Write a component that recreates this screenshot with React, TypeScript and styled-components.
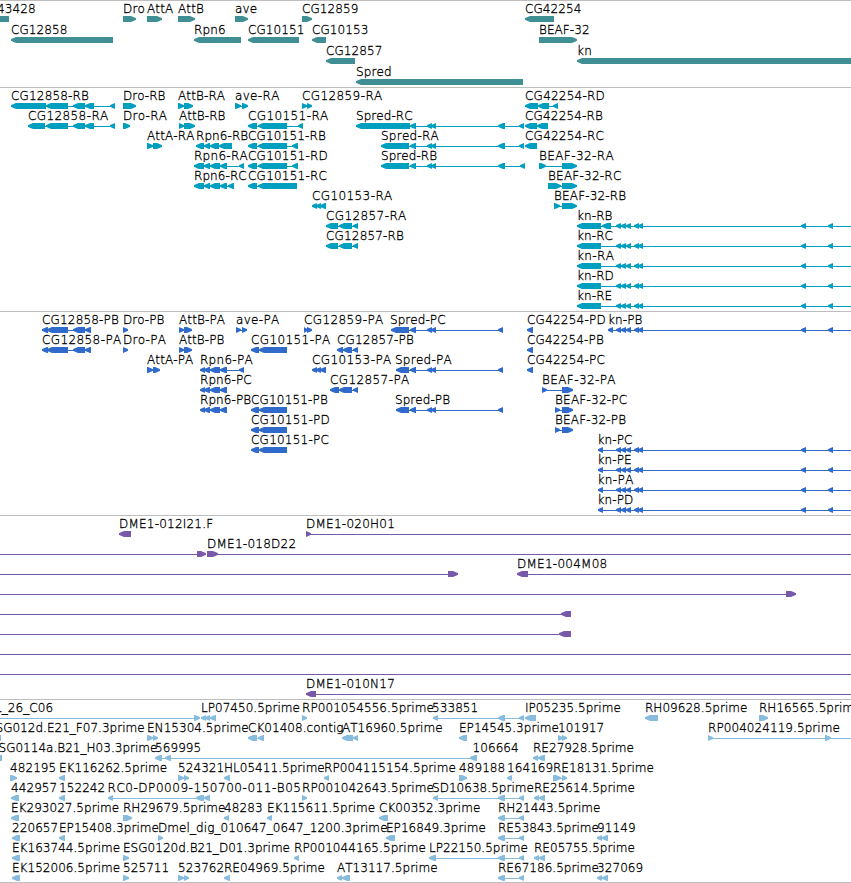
import React from "react";
import styled, { createGlobalStyle } from "styled-components";

const VIEW_WIDTH = 851;

const GlobalStyle = createGlobalStyle`
    body {
        margin: 0;
        background-color: #ffffff;
    }
`;
const Browser = styled.main`
    display: flex;
    flex-direction: column;
    width: ${VIEW_WIDTH}px;
    height: 883px;
    overflow: hidden;
    box-sizing: border-box;
    border-bottom: 1px solid #bebebe;
    font-family: "DejaVu Sans", sans-serif;
    font-size: 12px;
    font-kerning: none;
    color: #000000;
`;
const TrackArea = styled.section<{ $height: number; $color: string }>`
    display: flex;
    flex-direction: column;
    flex: none;
    height: ${(props) => props.$height}px;
    box-sizing: border-box;
    border-top: 1px solid #bebebe;
    color: ${(props) => props.$color};
`;
const RowArea = styled.div<{ $height: number }>`
    display: grid;
    grid-template-rows: 15px 1fr;
    flex: none;
    height: ${(props) => props.$height}px;
`;
const LabelStrip = styled.div`
    position: relative;
    z-index: 1;
`;
const Label = styled.span<{ $x: number; $spacing: number }>`
    position: absolute;
    left: ${(props) => props.$x}px;
    letter-spacing: ${(props) => props.$spacing}px;
    line-height: 16px;
    white-space: nowrap;
    font-weight: 200;
    -webkit-text-stroke: 0.3px #000000;
    color: #000000;
`;
const GlyphStrip = styled.svg`
    display: block;
    width: 100%;
    height: 6px;
    overflow: visible;
    fill: currentColor;
`;

type Dir = "L" | "R";
type Exon = [number, number];
interface IFeature {
    label?: string;
    labelX?: number;
    dir: Dir;
    exons: Exon[];
    // where the intron line begins and ends, if beyond the exons
    from?: number;
    to?: number;
}
interface ITrack {
    name: string;
    color: string;
    height: number;
    rowHeight: number;
    rows: IFeature[][];
}

const f = (
    label: string,
    dir: Dir,
    exons: Exon[],
    rest: Partial<IFeature> = {}
): IFeature => ({ label, dir, exons, ...rest });

const CG12858: Exon[] = [[46, 68], [73, 85], [85, 94], [110, 115]];
const CG12858_P: Exon[] = [[42, 48], [47, 68], [73, 85], [85, 91]];
const SPRED: Exon[] = [[410, 416], [427, 432], [431, 436]];
const SPRED_R: Exon[] = [...SPRED, [498, 505], [519, 524]];
const SPRED_P: Exon[] = [...SPRED, [498, 503]];
const KN: Exon[] = [
    [616, 621],
    [621, 626],
    [626, 631],
    [634, 639],
    [638, 643],
    [801, 806],
    [828, 833],
];
const RPN6: Exon[] = [[204, 210], [210, 220], [220, 227]];
const CG12857_R: Exon[] = [[326, 338], [339, 352], [353, 358]];
const CG10153: Exon[] = [[312, 317], [316, 321], [320, 326]];
const CG10151_P: Exon[] = [[251, 259], [259, 287]];
const TAIL: Exon[] = [[498, 505], [519, 524]];
const PAIR: Exon[] = [[534, 539], [539, 545]];
const edge = { to: VIEW_WIDTH };

const tracks: ITrack[] = [
    {
        name: "genes",
        color: "#408f94",
        height: 87,
        rowHeight: 21,
        rows: [
            [
                f("43428", "L", [[-10, 9]], { labelX: -3 }),
                f("Dro", "R", [[123, 136]]),
                f("AttA", "R", [[147, 162]]),
                f("AttB", "R", [[178, 195]]),
                f("ave", "R", [[235, 248]]),
                f("CG12859", "R", [[302, 312]]),
                f("CG42254", "L", [[525, 554]]),
            ],
            [
                f("CG12858", "L", [[11, 113]]),
                f("Rpn6", "L", [[194, 241]]),
                f("CG10151", "L", [[248, 299]]),
                f("CG10153", "L", [[312, 326]]),
                f("BEAF-32", "R", [[539, 577]]),
            ],
            [f("CG12857", "L", [[326, 355]]), f("kn", "L", [[577, 860]])],
            [f("Spred", "L", [[356, 523]])],
        ],
    },
    {
        name: "transcripts",
        color: "#009fbf",
        height: 224,
        rowHeight: 20,
        rows: [
            [
                f("CG12858-RB", "L", [[11, 46], ...CG12858]),
                f("Dro-RB", "R", [[123, 136]]),
                f("AttB-RA", "R", [[178, 184], [184, 193]]),
                f("ave-RA", "R", [[235, 241], [242, 248]]),
                f("CG12859-RA", "R", [[302, 307], [307, 312]]),
                f("CG42254-RD", "L", [[525, 538], [538, 549], [553, 558]]),
            ],
            [
                f("CG12858-RA", "L", [[28, 45], ...CG12858]),
                f("Dro-RA", "R", [[123, 130]]),
                f("AttB-RB", "R", [[179, 184], [184, 195]]),
                f("CG10151-RA", "L", [[248, 257], [258, 287], [298, 303]]),
                f("Spred-RC", "L", [[356, 410], ...SPRED_R]),
                f("CG42254-RB", "L", [[525, 537], [537, 548]]),
            ],
            [
                f("AttA-RA", "R", [[147, 153], [153, 162]]),
                f("Rpn6-RB", "L", [[196, 204], [204, 210], [210, 219], [219, 232]]),
                f("CG10151-RB", "L", [[248, 257], [258, 287], [292, 298]]),
                f("Spred-RA", "L", [[381, 409], ...SPRED_R]),
                f("CG42254-RC", "L", [[525, 537]]),
            ],
            [
                f("Rpn6-RA", "L", [[194, 204], ...RPN6, [239, 244]]),
                f("CG10151-RD", "L", [[248, 257], [258, 287], [292, 298]]),
                f("Spred-RB", "L", [[381, 409], ...SPRED, [498, 505], [520, 525]]),
                f("BEAF-32-RA", "R", [[539, 546], [562, 577]]),
            ],
            [
                f("Rpn6-RC", "L", [[194, 204], ...RPN6, [228, 234]]),
                f("CG10151-RC", "L", [[248, 257], [258, 297]]),
                f("BEAF-32-RC", "R", [[548, 561], [562, 577]]),
            ],
            [
                f("CG10153-RA", "L", CG10153),
                f("BEAF-32-RB", "R", [[554, 560], [562, 577]]),
            ],
            [
                f("CG12857-RA", "L", CG12857_R),
                f("kn-RB", "L", [[577, 601], [602, 611], ...KN], edge),
            ],
            [
                f("CG12857-RB", "L", CG12857_R),
                f("kn-RC", "L", [[577, 601], ...KN], edge),
            ],
            [f("kn-RA", "L", [[577, 601], ...KN], edge)],
            [f("kn-RD", "L", [[577, 601], ...KN], edge)],
            [f("kn-RE", "L", [[577, 601], ...KN], edge)],
        ],
    },
    {
        name: "proteins",
        color: "#306bcb",
        height: 204,
        rowHeight: 20,
        rows: [
            [
                f("CG12858-PB", "L", CG12858_P),
                f("Dro-PB", "R", [[123, 128]]),
                f("AttB-PA", "R", [[179, 184], [184, 192]]),
                f("ave-PA", "R", [[236, 241], [242, 247]]),
                f("CG12859-PA", "R", [[304, 308], [307, 312]]),
                f("Spred-PC", "L", [[391, 409], ...SPRED_P], { labelX: 390 }),
                f("CG42254-PD", "L", [[527, 533]]),
                f("kn-PB", "L", [[608, 613], ...KN], edge),
            ],
            [
                f("CG12858-PA", "L", CG12858_P),
                f("Dro-PA", "R", [[123, 128]]),
                f("AttB-PB", "R", [[179, 184], [184, 192]]),
                f("CG10151-PA", "L", CG10151_P),
                f("CG12857-PB", "L", [[337, 343], [343, 352], [353, 358]]),
                f("CG42254-PB", "L", [[527, 533]]),
            ],
            [
                f("AttA-PA", "R", [[147, 153], [153, 160]]),
                f("Rpn6-PA", "L", [[200, 205], ...RPN6, [239, 244]]),
                f("CG10153-PA", "L", CG10153),
                f("Spred-PA", "L", [[396, 409], ...SPRED_P], { labelX: 395 }),
                f("CG42254-PC", "L", [[527, 533]]),
            ],
            [
                f("Rpn6-PC", "L", [[200, 205], ...RPN6]),
                f("CG12857-PA", "L", [[330, 339], [339, 352], [353, 358]]),
                f("BEAF-32-PA", "R", [[542, 547], [562, 573]]),
            ],
            [
                f("Rpn6-PB", "L", [[200, 205], ...RPN6]),
                f("CG10151-PB", "L", CG10151_P),
                f("Spred-PB", "L", [[396, 409], ...SPRED_P], { labelX: 395 }),
                f("BEAF-32-PC", "R", [[555, 560], [562, 573]]),
            ],
            [
                f("CG10151-PD", "L", CG10151_P),
                f("BEAF-32-PB", "R", [[555, 560], [562, 573]]),
            ],
            [
                f("CG10151-PC", "L", CG10151_P),
                f("kn-PC", "L", [[598, 603], ...KN], { ...edge, labelX: 597.5 }),
            ],
            [f("kn-PE", "L", [[598, 603], ...KN], { ...edge, labelX: 597.5 })],
            [f("kn-PA", "L", [[598, 603], ...KN], { ...edge, labelX: 597.5 })],
            [f("kn-PD", "L", [[598, 603], ...KN], { ...edge, labelX: 597.5 })],
        ],
    },
    {
        name: "BACs",
        color: "#7858a8",
        height: 184,
        rowHeight: 20,
        rows: [
            [
                f("DME1-012I21.F", "L", [[119, 131]]),
                f("DME1-020H01", "R", [[306, 311]], edge),
            ],
            [
                { dir: "R", exons: [[197, 206]], from: 0 },
                f("DME1-018D22", "R", [[207, 218]], edge),
            ],
            [
                { dir: "R", exons: [[448, 458]], from: 0 },
                f("DME1-004M08", "L", [[517, 528]], edge),
            ],
            [{ dir: "R", exons: [[786, 796]], from: 0 }],
            [{ dir: "L", exons: [[561, 571]], from: 0 }],
            [{ dir: "L", exons: [[559, 571]], from: 0 }],
            [{ dir: "L", exons: [], from: 0, to: VIEW_WIDTH }],
            [{ dir: "L", exons: [], from: 0, to: VIEW_WIDTH }],
            [f("DME1-010N17", "L", [[306, 316]], edge)],
        ],
    },
    {
        name: "ESTs",
        color: "#87bcde",
        height: 183,
        rowHeight: 20,
        rows: [
            [
                f("L_26_C06", "R", [[194, 200]], { labelX: -5, from: 0 }),
                f("LP07450.5prime", "L", [[201, 206], [205, 210], [210, 216]]),
                f("RP001054556.5prime", "R", [[302, 307]]),
                f("533851", "L", [[433, 438], ...TAIL], { labelX: 432 }),
                f("IP05235.5prime", "L", [[525, 536]]),
                f("RH09628.5prime", "L", [[645, 658]]),
                f("RH16565.5prime", "R", [[759, 768]]),
            ],
            [
                f("SG012d.E21_F07.3prime", "L", [[-7, 1]], { labelX: -4.5 }),
                f("EN15304.5prime", "R", [[147, 153], [153, 158]]),
                f("CK01408.contig", "L", [[248, 257], [258, 264]]),
                f("AT16960.5prime", "L", [[342, 353], [353, 358]]),
                f("EP14545.3prime", "L", [[459, 467]]),
                f("101917", "R", [[558, 563], [562, 567]]),
                f("RP004024119.5prime", "R", [[708, 713], [825, 831]], edge),
            ],
            [
                f("SG0114a.B21_H03.3prime", "L", [[-7, 2]], { labelX: -1.5 }),
                f("569995", "L", [[155, 162], [165, 171], [470, 477]]),
                f("106664", "L", [[471, 477]], { labelX: 472.5 }),
                f("RE27928.5prime", "L", [[533, 538], [538, 545]]),
            ],
            [
                f("482195", "R", [[10, 17]]),
                f("EK116262.5prime", "L", [[59, 65]]),
                f("524321", "R", [[178, 184], [184, 189]]),
                f("HL05411.5prime", "L", [[224, 230]]),
                f("RP004115154.5prime", "L", [[324, 329]]),
                f("489188", "R", [[459, 467]]),
                f("164169", "L", [[507, 512]]),
                f("RE18131.5prime", "R", [[553, 561], [562, 567]]),
            ],
            [
                f("442957", "L", [[11, 19]]),
                f("152242", "L", [[59, 65]]),
                f("RC0-DP0009-150700-011-B05", "L", [[108, 113], [196, 204], [204, 210]], { labelX: 107.5 }),
                f("RP001042643.5prime", "R", [[302, 307]]),
                f("SD10638.5prime", "L", [[433, 438], ...TAIL], { labelX: 432 }),
                f("RE25614.5prime", "L", PAIR),
            ],
            [
                f("EK293027.5prime", "L", [[11, 19]]),
                f("RH29679.5prime", "R", [[123, 132]]),
                f("48283", "L", [[224, 229]]),
                f("EK115611.5prime", "L", [[267, 272]]),
                f("CK00352.3prime", "L", [[379, 388]]),
                f("RH21443.5prime", "L", TAIL),
            ],
            [
                f("220657", "L", [[12, 20]]),
                f("EP15408.3prime", "L", [[59, 65]]),
                f("Dmel_dig_010647_0647_1200.3prime", "R", [[158, 163]]),
                f("EP16849.3prime", "L", [[386, 395]]),
                f("RE53843.5prime", "L", TAIL),
                f("91149", "L", [[597, 602], [602, 608]]),
            ],
            [
                f("EK163744.5prime", "L", [[12, 20]]),
                f("ESG0120d.B21_D01.3prime", "R", [[123, 129]]),
                f("RP001044165.5prime", "L", [[294, 299]]),
                f("LP22150.5prime", "L", [[429, 436], ...TAIL]),
                f("RE05755.5prime", "L", PAIR),
            ],
            [
                f("EK152006.5prime", "L", [[12, 20]]),
                f("525711", "R", [[123, 129]]),
                f("523762", "R", [[178, 184], [184, 189]]),
                f("RE04969.5prime", "L", [[224, 230]]),
                f("AT13117.5prime", "L", [[337, 342], [342, 350]]),
                f("RE67186.5prime", "L", TAIL),
                f("327069", "L", [[597, 602], [602, 608]]),
            ],
        ],
    },
];

// letter spacing of a label: the extra pixels of its family, shared by its letters
const labelSpacing = (label: string) => {
    let extra = 0.5;
    if (/^(CG|BEAF).*-[RP].$/.test(label)) {
        extra = label.endsWith("A") ? 4 : label.endsWith("B") ? 1.7 : 2.3;
    } else if (/-[RP]A$/.test(label)) {
        extra = label.startsWith("Att") ? 0.8 : 2;
    } else if (label.startsWith("DME1")) {
        extra = 2.8;
    } else if (label.startsWith("RC0-")) {
        extra = 13.5;
    } else if (label.startsWith("RP00")) {
        extra = 1.3;
    } else if (label.startsWith("Dmel")) {
        extra = 2.5;
    }
    return extra / label.length;
};

// a bar whose head narrows to a blunt tip over its last 5 pixels
const exonPath = ([start, end]: Exon, dir: Dir) => {
    const head = Math.min(5, end - start);
    const [tip, back, step] = dir === "L" ? [start, end, 1] : [end, start, -1];
    const neck = tip + head * step;
    const bend = tip + 2 * step;
    return `M${tip} 2.3L${bend} 1.3L${neck} 0H${back}V6H${neck}L${bend} 4.7L${tip} 3.7Z`;
};

function Glyph({ feature: { dir, exons, from, to } }: { feature: IFeature }) {
    const start = from ?? exons[0][0];
    const end = to ?? exons[exons.length - 1][1];
    return (
        <g>
            <rect x={start} y={3} width={end - start} height={1} />
            {exons.map((exon, index) => (
                <path key={index} d={exonPath(exon, dir)} />
            ))}
        </g>
    );
}

function Track({ track }: { track: ITrack }) {
    return (
        <TrackArea
            $height={track.height}
            $color={track.color}
            aria-label={track.name}
        >
            {track.rows.map((row, index) => (
                <RowArea key={index} $height={track.rowHeight}>
                    <LabelStrip>
                        {row.map(
                            ({ label, labelX, exons }) =>
                                label && (
                                    <Label
                                        key={label}
                                        $x={labelX ?? exons[0][0]}
                                        $spacing={labelSpacing(label)}
                                    >
                                        {label}
                                    </Label>
                                )
                        )}
                    </LabelStrip>
                    <GlyphStrip>
                        {row.map((feature, index) => (
                            <Glyph key={index} feature={feature} />
                        ))}
                    </GlyphStrip>
                </RowArea>
            ))}
        </TrackArea>
    );
}

function App() {
    return (
        <>
            <GlobalStyle />
            <Browser>
                {tracks.map((track) => (
                    <Track key={track.name} track={track} />
                ))}
            </Browser>
        </>
    );
}

export default App;
